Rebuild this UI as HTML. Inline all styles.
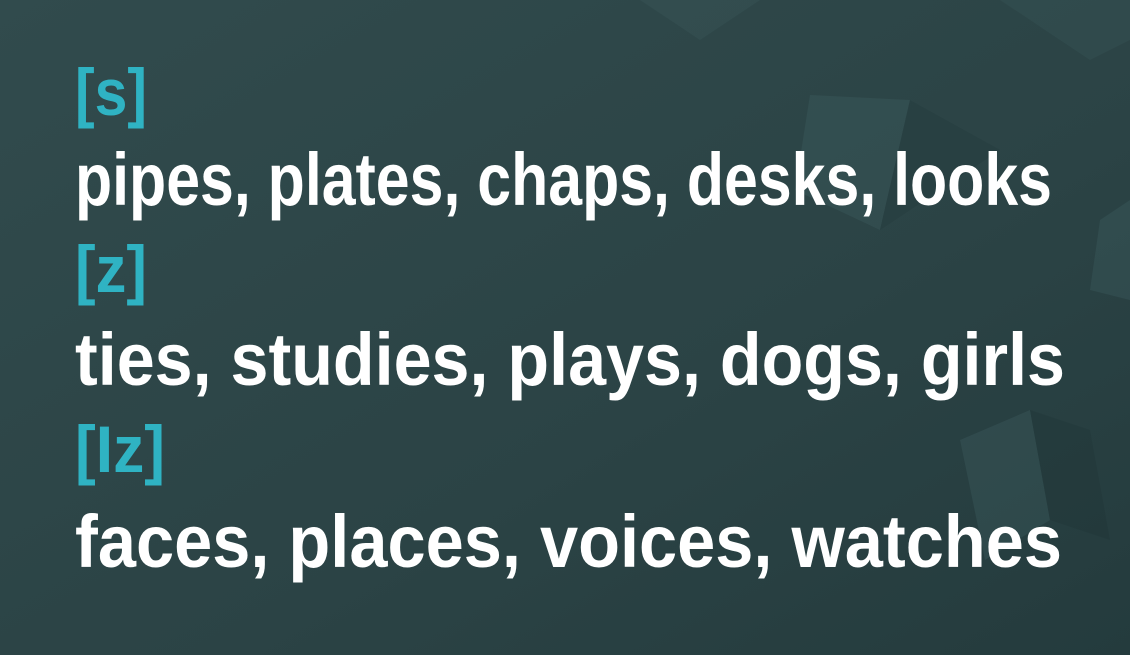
<!DOCTYPE html>
<html><head><meta charset="utf-8"><style>
html,body{margin:0;padding:0;background:#2c4446;}
svg{display:block}
</style></head><body>
<svg width="1130" height="655" viewBox="0 0 1130 655" xmlns="http://www.w3.org/2000/svg">
<defs>
<linearGradient id="bg" x1="0" y1="0" x2="1" y2="1">
<stop offset="0" stop-color="#314b4d"/><stop offset="0.6" stop-color="#2b4345"/><stop offset="1" stop-color="#243b3d"/>
</linearGradient>
</defs>
<rect width="1130" height="655" fill="url(#bg)"/>
<g opacity="0.35">
<polygon points="640,0 700,40 760,0" fill="#3b5a5c"/>
<polygon points="1000,0 1090,60 1130,40 1130,0" fill="#3a5759"/>
<polygon points="810,95 910,100 880,230 795,190" fill="#3f5f61"/>
<polygon points="880,230 910,100 1000,150" fill="#233a3c"/>
<polygon points="1100,220 1130,200 1130,300 1090,290" fill="#3f5f61"/>
<polygon points="960,440 1030,410 1050,520 985,560" fill="#3f5f61"/>
<polygon points="1030,410 1090,430 1110,540 1050,520" fill="#1f3436"/>
</g>
<g font-family="Liberation Sans, sans-serif" font-weight="bold">
<text x="75" y="115" font-size="66" fill="#2fb3c3" textLength="72" lengthAdjust="spacingAndGlyphs">[s]</text>
<text x="75" y="205" font-size="74" fill="#ffffff" textLength="977" lengthAdjust="spacingAndGlyphs">pipes, plates, chaps, desks, looks</text>
<text x="75" y="292" font-size="66" fill="#2fb3c3" textLength="72" lengthAdjust="spacingAndGlyphs">[z]</text>
<text x="75" y="385" font-size="74" fill="#ffffff" textLength="990" lengthAdjust="spacingAndGlyphs">ties, studies, plays, dogs, girls</text>
<text x="75" y="472" font-size="66" fill="#2fb3c3" textLength="90" lengthAdjust="spacingAndGlyphs">[Iz]</text>
<text x="75" y="567" font-size="74" fill="#ffffff" textLength="987" lengthAdjust="spacingAndGlyphs">faces, places, voices, watches</text>
</g>
</svg>
</body></html>
